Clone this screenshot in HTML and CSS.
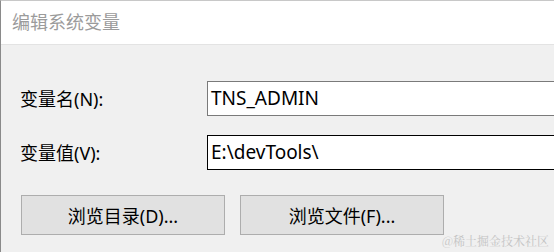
FILE: index.html
```html
<!DOCTYPE html>
<html lang="zh-CN">
<head>
<meta charset="utf-8">
<link rel="stylesheet" href="styles.css">
</head>
<body>
<div class="window">
  <div class="titlebar">编辑系统变量</div>
  <div class="content">
    <div class="form">
      <label class="label">变量名(N):</label>
      <div class="field">TNS_ADMIN</div>
      <label class="label">变量值(V):</label>
      <div class="field focused">E:\devTools\</div>
    </div>
    <div class="buttons">
      <div class="btn">浏览目录(D)...</div>
      <div class="btn">浏览文件(F)...</div>
    </div>
  </div>
  <div class="watermark">@稀土掘金技术社区</div>
</div>
</body>
</html>
```
FILE: styles.css
```css
html, body {
  margin: 0;
  padding: 0;
  width: 554px;
  height: 252px;
  overflow: hidden;
  background: #f0f0f0;
}
.window {
  position: relative;
  width: 553px;
  height: 251px;
  border-left: 1px solid #8a8a8a;
  border-top: 1px solid #c8c8c8;
  background: #f0f0f0;
  font-family: "Noto Sans", "Noto Sans CJK SC", sans-serif;
  color: #000;
}
.titlebar {
  height: 43px;
  background: #ffffff;
  border-bottom: 1px solid #e3e3e3;
  color: #9b9b9b;
  font-size: 18px;
  line-height: 43px;
  padding-left: 11px;
}
.content {
  padding: 36px 0 0 19px;
}
.form {
  display: grid;
  grid-template-columns: 187px 1fr;
  row-gap: 19px;
  align-items: center;
}
.label {
  font-size: 18px;
  line-height: 20px;
}
.field {
  height: 33px;
  border: 1px solid #7a7a7a;
  border-right: none;
  background: #ffffff;
  font-size: 19px;
  line-height: 32px;
  padding-left: 3px;
  white-space: nowrap;
  overflow: hidden;
}
.field.focused {
  border-color: #000000;
}
.buttons {
  display: flex;
  gap: 15px;
  margin-top: 25px;
  padding-left: 1px;
}
.btn {
  width: 202px;
  height: 38px;
  border: 1px solid #adadad;
  background: #e1e1e1;
  font-size: 18px;
  display: flex;
  align-items: center;
  justify-content: center;
}
.watermark {
  position: absolute;
  right: 5px;
  bottom: 3px;
  font-size: 12px;
  color: #c4c4c4;
  font-family: "Noto Serif CJK SC", "Noto Sans CJK SC", serif;
}
```
